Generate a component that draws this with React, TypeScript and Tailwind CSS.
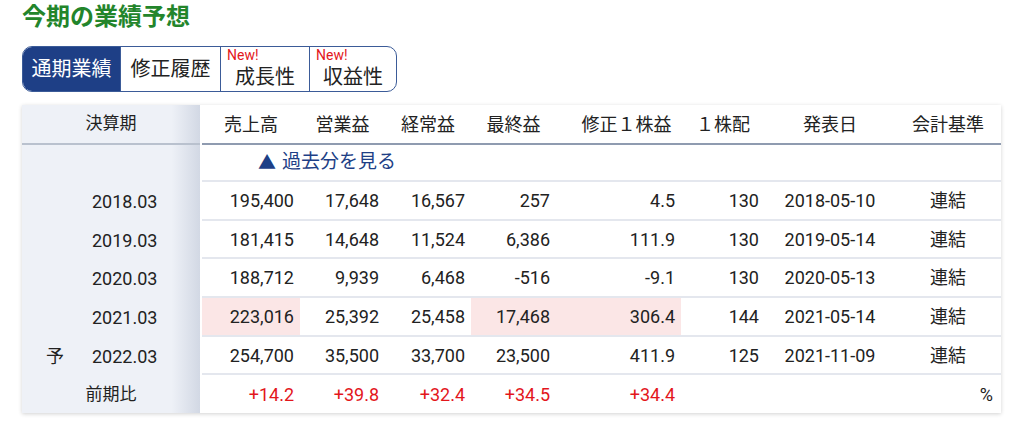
const font = "font-['Roboto','Noto_Sans_CJK_JP',sans-serif]";

const cols = ["w-[98px]", "w-[85px]", "w-[86px]", "w-[85px]", "w-[125px]", "w-[84px]", "w-[130px]", "w-[106px]"];
const heads = ["売上高", "営業益", "経常益", "最終益", "修正１株益", "１株配", "発表日", "会計基準"];

type Row = { mark?: string; period: string; vals: string[]; hl?: number[] };

const rows: Row[] = [
  { period: "2018.03", vals: ["195,400", "17,648", "16,567", "257", "4.5", "130", "2018-05-10", "連結"] },
  { period: "2019.03", vals: ["181,415", "14,648", "11,524", "6,386", "111.9", "130", "2019-05-14", "連結"] },
  { period: "2020.03", vals: ["188,712", "9,939", "6,468", "-516", "-9.1", "130", "2020-05-13", "連結"] },
  { period: "2021.03", vals: ["223,016", "25,392", "25,458", "17,468", "306.4", "144", "2021-05-14", "連結"], hl: [0, 3, 4] },
  { mark: "予", period: "2022.03", vals: ["254,700", "35,500", "33,700", "23,500", "411.9", "125", "2021-11-09", "連結"] },
];

const leftBg = "bg-[linear-gradient(to_right,#eef1f7_0%,#eef1f7_84%,#d2d8e4_100%)]";

function Tabs() {
  return (
    <div className="mt-[14px] flex h-[46px] w-[375px] overflow-hidden rounded-[10px] border border-[#3b5b98]">
      <div className="flex w-[97px] items-center justify-center bg-[#1e3f86] text-[20px] text-white">通期業績</div>
      <div className="flex w-[100px] items-center justify-center border-l border-[#3b5b98] text-[20px] text-[#222]">修正履歴</div>
      {["成長性", "収益性"].map((t, i) => (
        <div key={t} className={`relative flex w-[89px] items-end justify-center border-l border-[#3b5b98] pb-[4px] text-[20px] text-[#222] ${i === 1 ? "flex-1" : ""}`}>
          <span className="absolute left-[6px] top-[1px] text-[14px] leading-none text-[#e3161c]">New!</span>
          <span className="leading-none">{t}</span>
        </div>
      ))}
    </div>
  );
}

export default function App() {
  return (
    <div className={`${font} min-h-screen bg-white pl-[22px] pt-[3px] text-[#222]`}>
      <h2 className="text-[24px] font-bold leading-[29px] text-[#23852b]">今期の業績予想</h2>
      <Tabs />

      <div className="mt-[13px] w-[979px] bg-white shadow-[0_1px_4px_rgba(0,0,0,0.18)]">
        {/* header */}
        <div className="flex h-[40px]">
          <div className={`mr-[2px] flex w-[178px] items-center justify-center border-b-2 border-[#b9c1ce] ${leftBg} text-[17px]`}>決算期</div>
          <div className="flex flex-1 border-b-2 border-[#8f9bb0]">
            {heads.map((h, i) => (
              <div key={h} className={`${cols[i]} flex items-center justify-center text-[18px] ${i === 4 ? "pl-[16px]" : ""}`}>{h}</div>
            ))}
          </div>
        </div>

        {/* past link */}
        <div className="flex h-[37px]">
          <div className={`mr-[2px] w-[178px] ${leftBg}`} />
          <div className="flex flex-1 items-center border-b-2 border-[#e4e7ee] pl-[56px] text-[19px] text-[#1e3f86]">
            <span className="mr-[6px] text-[18px]">▲</span>過去分を見る
          </div>
        </div>

        {rows.map((r) => (
          <div key={r.period} className="flex h-[38.7px]">
            <div className={`mr-[2px] flex w-[178px] items-center ${leftBg} text-[18px]`}>
              <span className="w-[66px] text-center">{r.mark ?? ""}</span>
              <span className="pl-[4px]">{r.period}</span>
            </div>
            <div className="flex flex-1 border-b-2 border-[#e4e7ee] text-[18px]">
              {r.vals.map((v, i) => (
                <div
                  key={i}
                  className={`${cols[i]} flex items-center ${i >= 6 ? "justify-center" : "justify-end pr-[6px]"} ${r.hl?.includes(i) ? "bg-[#fbe6e6]" : ""}`}
                >
                  {v}
                </div>
              ))}
            </div>
          </div>
        ))}

        {/* ratio */}
        <div className="flex h-[38px]">
          <div className={`mr-[2px] flex w-[178px] items-center justify-center ${leftBg} text-[17px]`}>前期比</div>
          <div className="flex flex-1 text-[18px] text-[#e3161c]">
            {["+14.2", "+39.8", "+32.4", "+34.5", "+34.4"].map((v, i) => (
              <div key={i} className={`${cols[i]} flex items-center justify-end pr-[6px]`}>{v}</div>
            ))}
            <div className="flex flex-1 items-center justify-end pr-[8px] text-[#222]">%</div>
          </div>
        </div>
      </div>
    </div>
  );
}
